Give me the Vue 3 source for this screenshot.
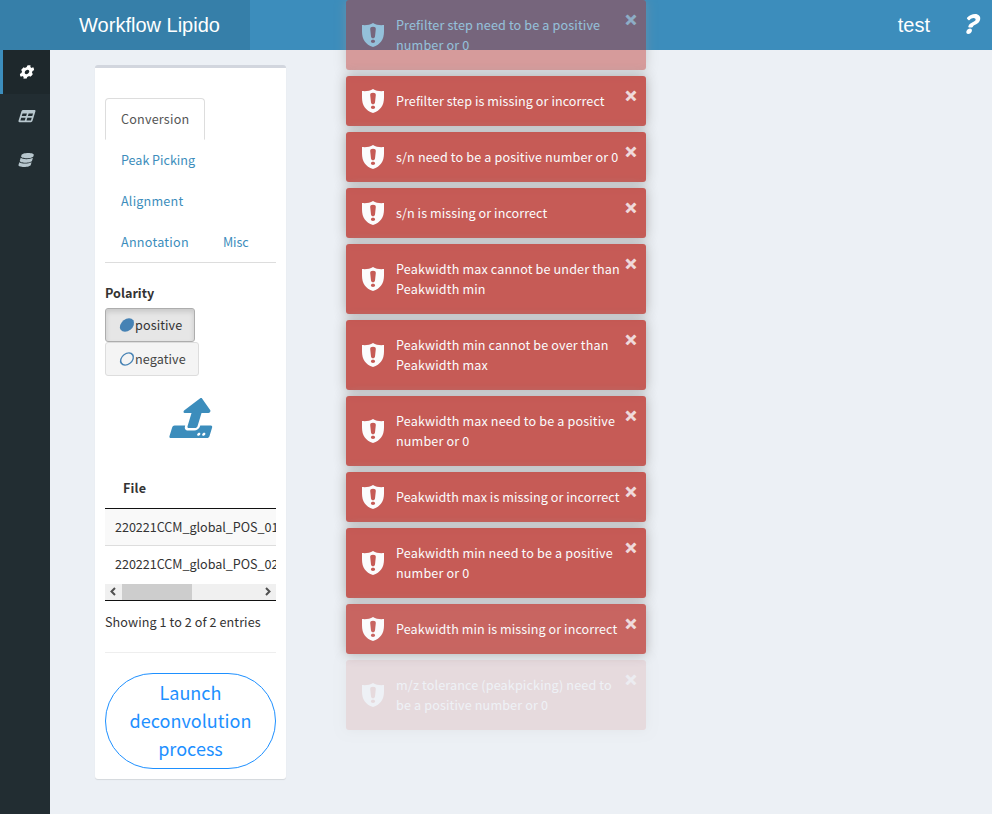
<script setup>
const gear = 'M487.4 315.7l-42.6-24.6c4.3-23.2 4.3-47 0-70.2l42.6-24.6c4.9-2.8 7.1-8.6 5.5-14-11.1-35.6-30-67.8-54.7-94.6-3.8-4.1-10-5.1-14.8-2.3L380.8 110c-17.9-15.4-38.5-27.3-60.8-35.1V25.8c0-5.6-3.9-10.5-9.4-11.7-36.7-8.2-74.3-7.8-109.2 0-5.5 1.2-9.4 6.1-9.4 11.7V75c-22.2 7.9-42.8 19.8-60.8 35.1L88.7 85.5c-4.9-2.8-11-1.9-14.8 2.3-24.7 26.7-43.6 58.9-54.7 94.6-1.7 5.4.6 11.2 5.5 14L67.3 221c-4.3 23.2-4.3 47 0 70.2l-42.6 24.6c-4.9 2.8-7.1 8.6-5.5 14 11.1 35.6 30 67.8 54.7 94.6 3.8 4.1 10 5.1 14.8 2.3l42.6-24.6c17.9 15.4 38.5 27.3 60.8 35.1v49.2c0 5.6 3.9 10.5 9.4 11.7 36.7 8.2 74.3 7.8 109.2 0 5.5-1.2 9.4-6.1 9.4-11.7v-49.2c22.2-7.9 42.8-19.8 60.8-35.1l42.6 24.6c4.9 2.8 11 1.9 14.8-2.3 24.7-26.7 43.6-58.9 54.7-94.6 1.5-5.5-.7-11.3-5.6-14.1zM256 336c-44.1 0-80-35.9-80-80s35.9-80 80-80 80 35.9 80 80-35.9 80-80 80z'
const table = 'M464 32H48C21.49 32 0 53.49 0 80v352c0 26.51 21.49 48 48 48h416c26.51 0 48-21.49 48-48V80c0-26.51-21.49-48-48-48zM224 416H64v-96h160v96zm0-160H64v-96h160v96zm224 160H288v-96h160v96zm0-160H288v-96h160v96z'
const database = 'M448 73.143v45.714C448 159.143 347.667 192 224 192S0 159.143 0 118.857V73.143C0 32.857 100.333 0 224 0s224 32.857 224 73.143zM448 176v102.857C448 319.143 347.667 352 224 352S0 319.143 0 278.857V176c48.125 33.143 136.208 48.572 224 48.572S399.874 209.143 448 176zm0 160v102.857C448 479.143 347.667 512 224 512S0 479.143 0 438.857V336c48.125 33.143 136.208 48.572 224 48.572S399.874 369.143 448 336z'
const menu = [
  { d: gear, box: '0 0 512 512', w: 14, active: true },
  { d: table, box: '0 0 512 512', w: 14 },
  { d: database, box: '0 0 448 512', w: 12.25 },
]
const tabs = ['Conversion', 'Peak Picking', 'Alignment', 'Annotation', 'Misc']
const files = ['220221CCM_global_POS_01', '220221CCM_global_POS_02']
const toasts = [
  { lines: ['Prefilter step need to be a positive', 'number or 0'], opacity: 0.45 },
  { lines: ['Prefilter step is missing or incorrect'], opacity: 0.8 },
  { lines: ['s/n need to be a positive number or 0'], opacity: 0.8 },
  { lines: ['s/n is missing or incorrect'], opacity: 0.8 },
  { lines: ['Peakwidth max cannot be under than', 'Peakwidth min'], opacity: 0.8 },
  { lines: ['Peakwidth min cannot be over than', 'Peakwidth max'], opacity: 0.8 },
  { lines: ['Peakwidth max need to be a positive', 'number or 0'], opacity: 0.8 },
  { lines: ['Peakwidth max is missing or incorrect'], opacity: 0.8 },
  { lines: ['Peakwidth min need to be a positive', 'number or 0'], opacity: 0.8 },
  { lines: ['Peakwidth min is missing or incorrect'], opacity: 0.745 },
  { lines: ['m/z tolerance (peakpicking) need to', 'be a positive number or 0'], opacity: 0.113 },
]
</script>

<template>
  <div class="page">
    <header class="header">
      <div class="logo">Workflow Lipido</div>
      <nav class="nav">
        <span>test</span>
        <svg class="help" viewBox="0 0 384 512"><path d="M202.021 0C122.202 0 70.503 32.703 29.914 91.026c-7.363 10.58-5.093 25.086 5.178 32.874l43.138 32.709c10.373 7.865 25.132 6.026 33.253-4.148 25.049-31.381 43.63-49.449 82.757-49.449 30.764 0 68.816 19.799 68.816 49.631 0 22.552-18.617 34.134-48.993 51.164-35.423 19.86-82.299 44.576-82.299 106.405V320c0 13.255 10.745 24 24 24h72.471c13.255 0 24-10.745 24-24v-5.773c0-42.86 125.268-44.645 125.268-160.627C377.504 66.256 286.902 0 202.021 0zM192 373.459c-38.196 0-69.271 31.075-69.271 69.271 0 38.195 31.075 69.27 69.271 69.27s69.271-31.075 69.271-69.271-31.075-69.27-69.271-69.27z" /></svg>
      </nav>
    </header>
    <div class="body">
      <aside class="sidebar">
        <a v-for="(m, i) in menu" :key="i" class="item" :class="{ active: m.active }">
          <svg class="slant" :viewBox="m.box" :width="m.w" height="14"><path :d="m.d" /></svg>
        </a>
      </aside>
      <main class="content">
        <section class="card">
          <ul class="tabs">
            <li v-for="(t, i) in tabs" :key="t"><a :class="{ on: i === 0 }">{{ t }}</a></li>
          </ul>
          <div class="label">Polarity</div>
          <div class="choices">
            <button class="choice on"><svg class="slant dot" viewBox="0 0 14 14"><circle cx="7" cy="7" r="6.8" /></svg>positive</button>
            <button class="choice"><svg class="slant dot ring" viewBox="0 0 14 14"><circle cx="7" cy="7" r="6.1" /></svg>negative</button>
          </div>
          <div class="upload">
            <svg class="slant" viewBox="0 0 512 512" width="40" height="40"><path d="M296 384h-80c-13.3 0-24-10.7-24-24V192h-87.7c-17.8 0-26.7-21.5-14.1-34.1L242.3 5.7c7.5-7.5 19.8-7.5 27.3 0l152.2 152.2c12.6 12.6 3.7 34.1-14.1 34.1H320v168c0 13.3-10.7 24-24 24zm216-8v112c0 13.3-10.7 24-24 24H24c-13.3 0-24-10.7-24-24V376c0-13.3 10.7-24 24-24h136v8c0 30.9 25.1 56 56 56h80c30.9 0 56-25.1 56-56v-8h136c13.3 0 24 10.7 24 24zm-124 88c0-11-9-20-20-20s-20 9-20 20 9 20 20 20 20-9 20-20zm64 0c0-11-9-20-20-20s-20 9-20 20 9 20 20 20 20-9 20-20z" /></svg>
          </div>
          <div class="thead">File</div>
          <div class="rows">
            <div v-for="f in files" :key="f" class="row">{{ f }}</div>
            <div class="scroll">
              <svg viewBox="0 0 17 15" width="17" height="15"><path d="M10 4L6.500 7.5l3.5 3.5" /></svg>
              <div class="thumb"></div>
              <svg viewBox="0 0 17 15" width="17" height="15"><path d="M7 4l3.5 3.5L7 11" /></svg>
            </div>
          </div>
          <div class="info">Showing 1 to 2 of 2 entries</div>
          <button class="launch">Launch<br>deconvolution<br>process</button>
        </section>
      </main>
    </div>
    <div class="toasts">
      <div v-for="(t, i) in toasts" :key="i" class="toast" :style="{ opacity: t.opacity }">
        <svg class="shield" viewBox="0 0 22 24">
          <path fill-rule="evenodd" d="M11 0C14 2 18 2.5 22 2.1V8.500C22 16.500 18.500 21.500 11 24C3.500 21.500 0 16.500 0 8.500V2.100C4 2.500 8 2 11 0ZM11 3.800C9.200 3.800 8.100 4.500 8.200 6L9 13.500C9.300 15.900 12.700 15.900 13 13.500L13.800 6C13.900 4.500 12.800 3.800 11 3.800ZM11 16.700C9.700 16.700 8.900 17.300 8.900 18.300S9.700 20 11 20S13.100 19.300 13.100 18.300S12.300 16.700 11 16.700Z" />
        </svg>
        <div class="msg" :class="{ tight: t.lines[0].includes('is missing') }"><div v-for="l in t.lines" :key="l">{{ l }}</div></div>
        <span class="close">×</span>
      </div>
    </div>
  </div>
</template>

<style>
body { margin: 0; background: #ecf0f5; }
</style>

<style scoped>
* { box-sizing: border-box; }
.page {
  position: relative; height: 814px; overflow: hidden; display: flex; flex-direction: column;
  font: 12.6px/20px "Noto Sans CJK SC", "Source Sans Pro", sans-serif; letter-spacing: 0.2px; color: #333;
}
.header { display: flex; height: 50px; background: #3c8dbc; color: #fff; font: 20px/50px "Liberation Sans", sans-serif; letter-spacing: 0; }
.logo { width: 250px; padding-left: 49px; background: #367fa9; text-align: center; }
.nav { flex: 1; display: flex; justify-content: flex-end; padding-right: 13px; }
.help { width: 15px; height: 20px; margin: 14px 0 0 34px; fill: #fff; overflow: visible; transform: skewX(-18deg); }
.slant { transform: skewX(-17deg); overflow: visible; }
.body { flex: 1; display: flex; }
.sidebar { width: 50px; background: #222d32; }
.item { display: flex; align-items: center; height: 44px; padding-left: 19.5px; fill: #b8c7ce; }
.item.active { background: #1e282c; border-left: 3px solid #3c8dbc; padding-left: 16.5px; fill: #fff; }
.content { padding: 15px 45px; }
.card { width: 191px; height: 714px; padding: 30px 10px 10px; background: #fff; border-top: 3px solid #d2d6de; border-radius: 3px; box-shadow: 0 1px 1px rgba(0,0,0,.1); }
.tabs { display: flex; flex-wrap: wrap; list-style: none; margin: 0; padding: 0; border-bottom: 1px solid #ddd; }
.tabs li { height: 41px; }
.tabs li:nth-child(2), .tabs li:nth-child(3) { width: 100%; }
.tabs li:nth-child(2) { letter-spacing: -0.03px; }
.tabs li:nth-child(4) { letter-spacing: 0.26px; }
.tabs li:nth-child(5) { letter-spacing: -0.1px; }
.tabs a { display: block; height: 42px; margin-right: 2px; padding: 10px 15px; border: 1px solid transparent; color: #3c8dbc; }
.tabs a.on { height: 42px; color: #555; border-color: #ddd; border-bottom-color: #fff; border-radius: 4px 4px 0 0; }
.label { margin-top: 20px; font-weight: 700; letter-spacing: 0; }
.choices { display: flex; flex-direction: column; align-items: flex-start; margin-top: 5px; letter-spacing: 0.1px; }
.choice { display: flex; align-items: center; height: 34px; padding: 0 12px 0 14px; font: inherit; letter-spacing: inherit; color: #444; background: #f4f4f4; border: 1px solid #ddd; border-radius: 3px; white-space: nowrap; }
.choice.on { color: #333; background: #e6e6e6; border-color: #adadad; box-shadow: inset 0 3px 5px rgba(0,0,0,.125); }
.dot { width: 14px; height: 14px; margin: 0 1.5px 0 -0.5px; fill: steelblue; }
.ring { fill: none; stroke: steelblue; stroke-width: 1.4; }
.upload { height: 40px; margin: 22px 0 0 69.5px; fill: #3c8dbc; }
.upload svg { display: block; }
.thead { height: 71px; padding: 40px 18px 0; border-bottom: 1px solid #111; font-weight: 700; }
.rows { overflow: hidden; border-bottom: 1px solid #111; }
.row { height: 36px; padding: 8px 10px; background: #f9f9f9; white-space: nowrap; letter-spacing: -0.04px; }
.row + .row { height: 39px; background: #fff; border-top: 1px solid #ddd; }
.scroll { display: flex; height: 16px; background: #f0f0f0; }
.scroll svg { fill: none; stroke: #505050; stroke-width: 2; }
.thumb { width: 70px; margin: 0 auto 0 0; background: #cdcdcd; }
.info { height: 52px; padding-top: 11px; border-bottom: 1px solid #eee; letter-spacing: 0.08px; }
.launch { width: 171px; height: 96px; margin-top: 20px; padding: 4px 0 6px; border: 1px solid #1e90ff; border-radius: 50px; background: #fff; color: #1e90ff; font: 18px/28px "Noto Sans CJK SC", sans-serif; letter-spacing: 0.03px; }
.toasts { position: absolute; top: 0; left: 346px; width: 300px; display: flex; flex-direction: column; gap: 6px; }
.toast { position: relative; display: flex; align-items: center; padding: 15px 0 15px 16px; border-radius: 3px; background: #bd362f; color: #fff; box-shadow: 0 0 12px #999; }
.shield { width: 22px; height: 24px; margin: -2px 12px -2px 0; fill: #fff; }
.msg { white-space: nowrap; letter-spacing: 0.14px; }
.msg.tight { letter-spacing: 0.07px; }
.close { position: absolute; right: 8px; top: 10px; width: 14px; text-align: center; font: 700 16px/20px "DejaVu Sans", sans-serif; letter-spacing: 0; opacity: .8; -webkit-text-stroke: 0.9px #fff; }
</style>
